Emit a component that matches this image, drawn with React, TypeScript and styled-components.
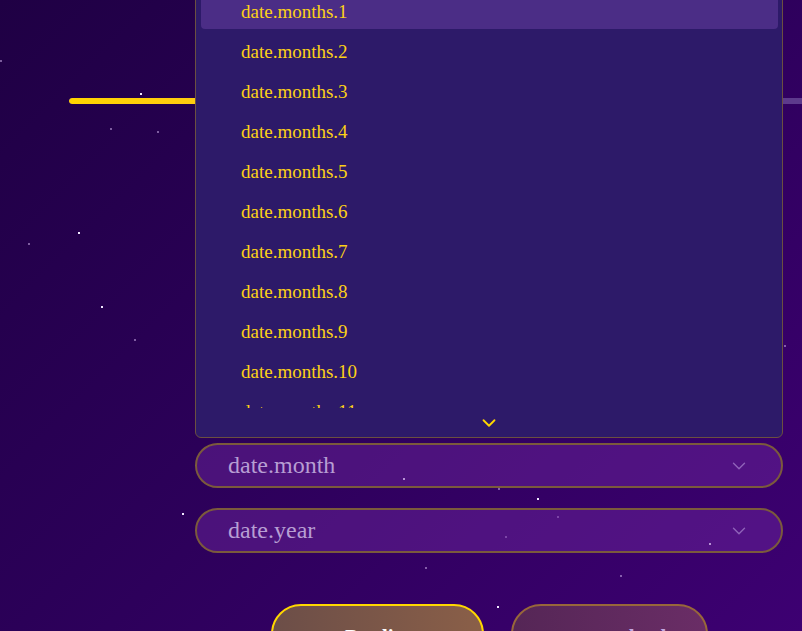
import React from "react";
import styled, { createGlobalStyle } from "styled-components";
import { ChevronDown } from "lucide-react";

const GlobalStyle = createGlobalStyle`
  html, body {
    margin: 0;
    padding: 0;
    overflow: hidden;
    background: #26004c;
  }
  * {
    box-sizing: border-box;
  }
`;

const Page = styled.div`
  position: relative;
  width: 100vw;
  height: 631px;
  overflow: hidden;
  background: linear-gradient(135deg, #1f0044 0%, #2b0058 45%, #3d0072 100%);
  font-family: "Liberation Serif", "DejaVu Serif", serif;
`;

const Stars = styled.div`
  position: absolute;
  inset: 0;
  z-index: 0;
`;

const Star = styled.span<{ $bright?: boolean }>`
  position: absolute;
  width: 2px;
  height: 2px;
  background: ${(p) => (p.$bright ? "#f1e9ff" : "rgba(200, 170, 230, 0.55)")};
`;

const Content = styled.div`
  position: relative;
  z-index: 1;
  display: flex;
  flex-direction: column;
  align-items: flex-start;
  padding: 98px 0 0 69px;
`;

const Track = styled.div`
  align-self: stretch;
  height: 6px;
  border-radius: 3px 0 0 3px;
  background: #5d3a8c;
  overflow: hidden;
`;

const Fill = styled.div`
  height: 100%;
  border-radius: 3px;
  background: linear-gradient(90deg, #ffd500 0%, #ffbb2a 100%);
`;

const Fields = styled.div`
  width: 588px;
  margin: 339px 0 0 126px;
  display: flex;
  flex-direction: column;
  gap: 20px;
`;

const Trigger = styled.div`
  height: 45px;
  border: 2px solid #7b5a3c;
  border-radius: 23px;
  background: rgba(112, 40, 162, 0.45);
  display: flex;
  align-items: center;
  justify-content: space-between;
  padding: 0 31px 0 31px;
  color: #b79ed3;
  font-size: 24px;
  svg {
    color: #8f63b9;
  }
`;

const Actions = styled.div`
  margin: 51px 0 0 202px;
  display: flex;
  gap: 27px;
`;

const ActionButton = styled.button<{ $primary?: boolean; $w: number }>`
  width: ${(p) => p.$w}px;
  height: 60px;
  border-radius: 32px;
  border: 2px solid ${(p) => (p.$primary ? "#ffd700" : "#98673a")};
  background: ${(p) =>
    p.$primary
      ? "linear-gradient(90deg, #6c4e48 0%, #8a5f48 100%)"
      : "linear-gradient(90deg, #552656 0%, #6a2d66 100%)"};
  color: ${(p) => (p.$primary ? "#ffffff" : "#c3a6e0")};
  font-family: "Liberation Serif", serif;
  font-weight: 700;
  font-size: 21px;
  line-height: 24px;
  padding: 19px 0 0;
  display: flex;
  justify-content: center;
  align-items: flex-start;
`;

const Panel = styled.div`
  position: absolute;
  z-index: 2;
  left: 195px;
  top: -11px;
  width: 588px;
  height: 449px;
  background: #2d1a69;
  border: 1px solid #6b5040;
  border-radius: 6px;
  display: flex;
  flex-direction: column;
  overflow: hidden;
`;

const Viewport = styled.div`
  height: 418px;
  overflow: hidden;
  padding: 3px 4px 0 5px;
  display: flex;
  flex-direction: column;
  gap: 4px;
`;

const Item = styled.div<{ $active?: boolean }>`
  flex: 0 0 36px;
  display: flex;
  align-items: center;
  padding: 2px 0 0 40px;
  border-radius: 4px;
  background: ${(p) => (p.$active ? "#4b2d86" : "transparent")};
  color: #fcd116;
  font-size: 19px;
`;

const ScrollDown = styled.div`
  flex: 1;
  display: flex;
  justify-content: center;
  align-items: center;
  padding-right: 1px;
  color: #ffd700;
`;

const stars: [number, number, boolean][] = [
  [0, 60, false],
  [140, 93, true],
  [110, 128, false],
  [157, 131, false],
  [28, 243, false],
  [78, 232, true],
  [101, 306, true],
  [134, 339, false],
  [182, 513, true],
  [403, 478, true],
  [498, 488, false],
  [537, 498, true],
  [557, 516, false],
  [505, 536, false],
  [709, 543, true],
  [425, 567, false],
  [497, 606, true],
  [620, 575, false],
  [784, 345, false],
];

const months = Array.from({ length: 11 }, (_, i) => `date.months.${i + 1}`);

export default function App() {
  return (
    <>
      <GlobalStyle />
      <Page>
        <Stars>
          {stars.map(([x, y, b], i) => (
            <Star key={i} $bright={b} style={{ left: x, top: y }} />
          ))}
        </Stars>
        <Content>
          <Track>
            <Fill style={{ width: "45%" }} />
          </Track>
          <Fields>
            <Trigger>
              <span>date.month</span>
              <ChevronDown size={22} strokeWidth={1.5} />
            </Trigger>
            <Trigger>
              <span>date.year</span>
              <ChevronDown size={22} strokeWidth={1.5} />
            </Trigger>
          </Fields>
          <Actions>
            <ActionButton $primary $w={213}>
              Predict
            </ActionButton>
            <ActionButton $w={197}>common.back</ActionButton>
          </Actions>
        </Content>
        <Panel>
          <Viewport>
            {months.map((m, i) => (
              <Item key={m} $active={i === 0}>
                {m}
              </Item>
            ))}
          </Viewport>
          <ScrollDown>
            <ChevronDown size={22} strokeWidth={2} />
          </ScrollDown>
        </Panel>
      </Page>
    </>
  );
}
